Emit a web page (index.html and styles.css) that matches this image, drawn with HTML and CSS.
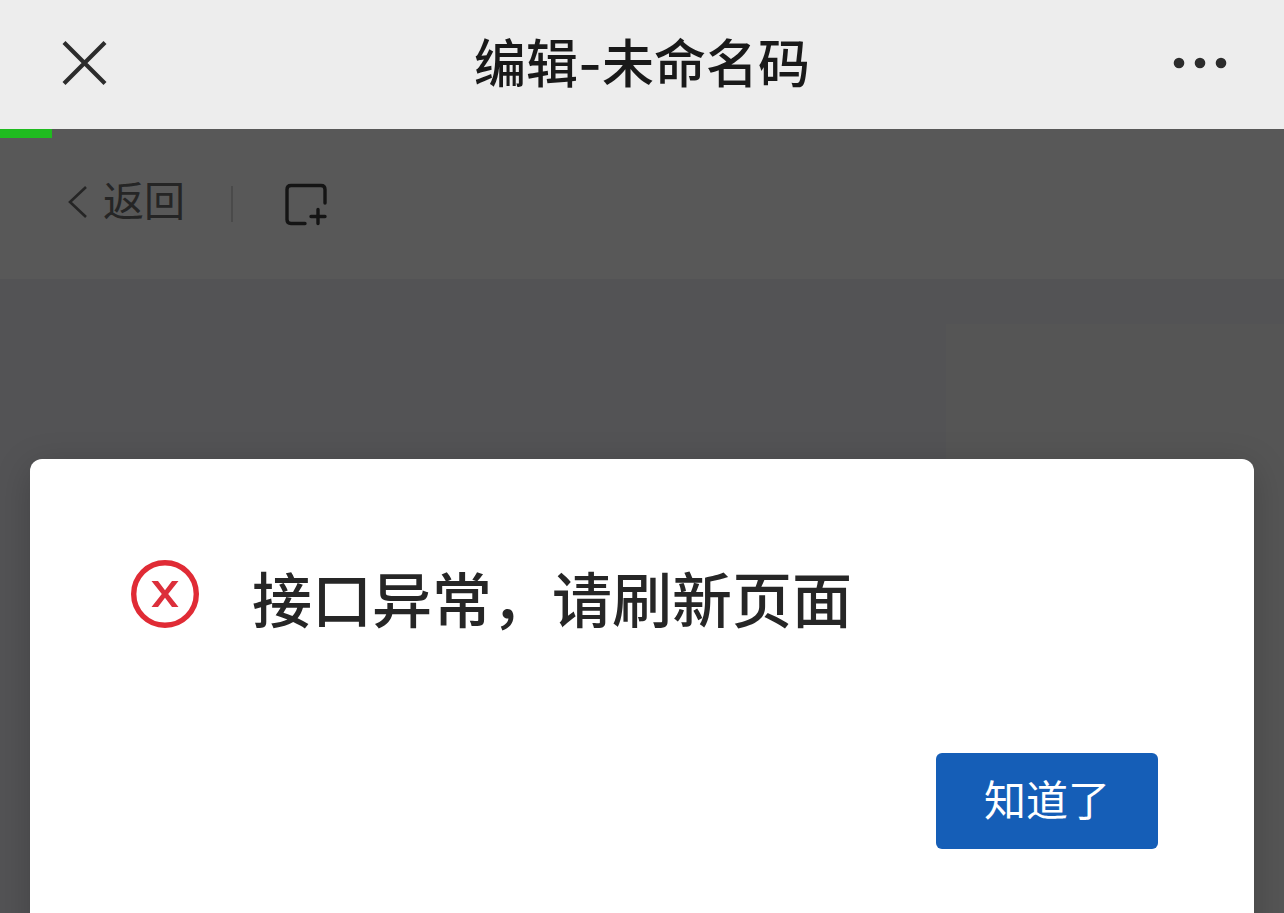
FILE: index.html
```html
<!DOCTYPE html>
<html lang="zh-CN">
<head>
<meta charset="utf-8">
<meta name="viewport" content="width=device-width, initial-scale=1">
<title>编辑-未命名码</title>
<link rel="stylesheet" href="styles.css">
</head>
<body>
<header class="titlebar">
  <button class="icon-button" type="button" aria-label="关闭">
    <svg width="56" height="44" viewBox="0 0 56 44" fill="none" stroke="#2c2c2c" stroke-width="4.200"><path d="M8 1.500 49 42.500M49 1.500 8 42.500"/></svg>
  </button>
  <h1 class="title">编辑-未命名码</h1>
  <button class="icon-button icon-button-end" type="button" aria-label="更多">
    <svg width="56" height="12" viewBox="0 0 56 12" fill="#2c2c2c"><circle cx="7" cy="6" r="5.3"/><circle cx="28" cy="6" r="5.3"/><circle cx="49" cy="6" r="5.3"/></svg>
  </button>
</header>
<main class="page">
  <div class="progress"></div>
  <nav class="toolbar">
    <a class="back" href="#">
      <svg width="20" height="32" viewBox="0 0 20 32" fill="none" stroke="#252525" stroke-width="2.6"><path d="M19 1 3 16 19 31"/></svg>
      <span>返回</span>
    </a>
    <span class="divider"></span>
    <button class="icon-button" type="button" aria-label="新建">
      <svg width="44" height="44" viewBox="0 0 44 44" fill="none" stroke="#141414" stroke-width="3.4" stroke-linecap="round"><path d="M21 41.500H7Q3 41.500 3 37.500V7.500Q3 3.500 7 3.500H37Q41 3.500 41 7.500V21"/><path d="M27 34.500H41M34 27.500V41.500"/></svg>
    </button>
  </nav>
  <section class="workspace">
    <div class="panel"></div>
  </section>
</main>
<div class="dialog" role="alertdialog" aria-labelledby="message">
  <div class="dialog-body">
    <svg class="error-icon" width="68" height="68" viewBox="0 0 68 68" fill="none"><circle cx="34" cy="34" r="31.3" stroke="#e02b35" stroke-width="5.4"/><path fill="#dc2f3b" d="M20.500 21h6.500l7 9.300 7-9.300h6.500L37.200 34 47.500 47H41l-7-9.300L27 47h-6.500l10.300-13z"/></svg>
    <h2 class="message" id="message">接口异常，请刷新页面</h2>
  </div>
  <div class="dialog-actions">
    <button class="confirm" type="button">知道了</button>
  </div>
</div>
</body>
</html>
```

FILE: styles.css
```css
* {
  box-sizing: border-box;
}

body {
  position: relative;
  display: flex;
  flex-direction: column;
  min-height: 100vh;
  margin: 0;
  overflow: hidden;
  font-family: "Noto Sans CJK SC", sans-serif;
  background: #535355;
}

button {
  padding: 0;
  border: 0;
  background: none;
  font: inherit;
  cursor: pointer;
}

svg {
  display: block;
}

.titlebar {
  display: grid;
  grid-template-columns: 1fr auto 1fr;
  align-items: center;
  padding: 22px 56px 25px;
  background: #ededed;
}

.icon-button {
  justify-self: start;
}

.icon-button-end {
  justify-self: end;
}

.title {
  margin: 0;
  padding-top: 4px;
  color: #191919;
  font-family: Inter, "Noto Sans CJK SC", sans-serif;
  font-size: 52px;
  font-weight: 500;
  line-height: 78px;
}

.page {
  position: relative;
  display: flex;
  flex: 1;
  flex-direction: column;
}

.progress {
  position: absolute;
  top: 0;
  left: 0;
  width: 52px;
  height: 9px;
  background: #1fbb1f;
}

.toolbar {
  display: flex;
  align-items: center;
  height: 150px;
  padding: 0 67px;
  background: #585858;
}

.back {
  display: flex;
  align-items: center;
  gap: 16px;
  padding-bottom: 4px;
  color: #252525;
  font-size: 41px;
  line-height: 60px;
  text-decoration: none;
}

.back span {
  padding-bottom: 8px;
}

.divider {
  width: 2px;
  height: 36px;
  margin: 0 51px 0 46px;
  background: #4a4a4a;
}

.workspace {
  display: flex;
  flex: 1;
  justify-content: flex-end;
  padding-top: 45px;
  background: #535355;
}

.panel {
  width: 338px;
  background: #555555;
}

.dialog {
  position: absolute;
  top: 459px;
  right: 30px;
  left: 30px;
  padding: 93px 96px 96px 101px;
  border-radius: 12px;
  background: #ffffff;
  box-shadow: 0 8px 36px rgba(0, 0, 0, 0.2);
}

.dialog-body {
  display: flex;
  align-items: flex-start;
  gap: 53px;
}

.error-icon {
  flex: none;
  margin-top: 8px;
}

.message {
  margin: 0;
  color: #262626;
  font-size: 60px;
  font-weight: 500;
  line-height: 90px;
}

.dialog-actions {
  display: flex;
  justify-content: flex-end;
  margin-top: 111px;
}

.confirm {
  padding: 15px 48px 21px;
  border-radius: 6px;
  background: #155eb7;
  color: #ffffff;
  font-size: 42px;
  line-height: 60px;
}
```
